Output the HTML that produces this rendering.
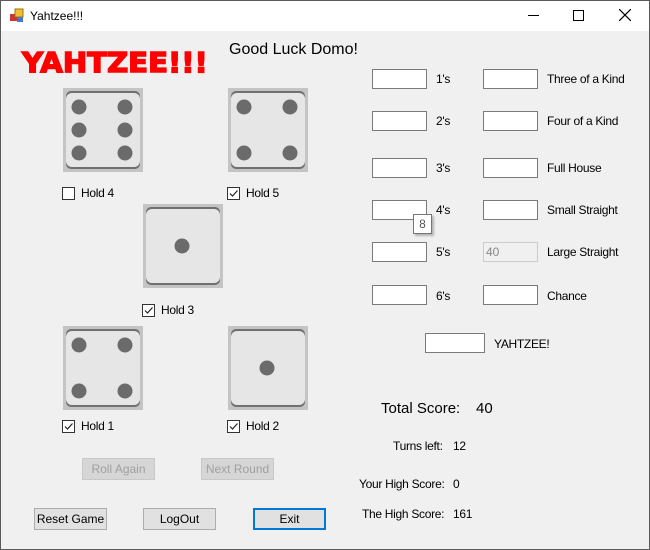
<!DOCTYPE html>
<html><head><style>
body{margin:0;width:650px;height:550px;overflow:hidden;font-family:"Liberation Sans",sans-serif;font-size:12px;color:#000}
.win{position:absolute;left:0;top:0;width:650px;height:550px;background:#f0f0f0}
.frame{position:absolute;left:0;top:0;width:648px;height:548px;border:1px solid #5a5a5a;z-index:5}
.title{position:absolute;left:0;top:0;width:650px;height:31px;background:#fff}
.a{position:absolute}
.tb{position:absolute;width:53px;height:18px;background:#fff;border:1px solid #7a7a7a}
.lbl{position:absolute;font-size:12px;letter-spacing:-0.3px}
.cb{position:absolute;width:11px;height:11px;border:1px solid #333;background:#fff}
.btn{position:absolute;height:20px;border:1px solid #adadad;background:#e1e1e1;text-align:center;line-height:20px;font-size:12px}
.dis{color:#a0a0a0;background:#d6d6d6;border-color:#c8c8c8}
</style></head><body>
<div class="win">
<div class="frame"></div>
<div class="title">
<svg class="a" style="left:9px;top:8px" width="16" height="16"><rect x="1" y="6" width="7" height="7" fill="#c33"/><rect x="6" y="1" width="8" height="8" fill="#f0c030" stroke="#a07010"/><rect x="8" y="9" width="6" height="5" fill="#4a78c8"/></svg>
<div class="a" style="left:30px;top:9px;font-size:12px">Yahtzee!!!</div>
<div class="a" style="left:528px;top:15px;width:11px;height:1px;background:#000"></div>
<div class="a" style="left:573px;top:10px;width:9px;height:9px;border:1px solid #000"></div>
<svg class="a" style="left:619px;top:9px" width="12" height="12"><path d="M0 0L12 12M12 0L0 12" stroke="#000" stroke-width="1.2"/></svg>
</div>
<div class="a" style="left:22px;top:46px;color:#f00;font-family:'DejaVu Sans',sans-serif;font-weight:900;font-size:28px;letter-spacing:0px;transform:scaleX(1.04);transform-origin:left;-webkit-text-stroke:1.5px #f00">YAHTZEE!!!</div>
<div class="a" style="left:229px;top:41px;font-size:16px">Good Luck Domo!</div>

<svg class="a" style="left:63px;top:88px" width="80" height="84"><rect width="80" height="84" fill="#c4c4c4"/><rect x="3" y="3" width="74" height="78" rx="5" fill="#707070"/><rect x="3" y="5" width="74" height="74" rx="6" fill="#e6e6e6"/><g fill="#6b6b6b"><circle cx="16" cy="19" r="7.5"/><circle cx="62" cy="19" r="7.5"/><circle cx="16" cy="42" r="7.5"/><circle cx="62" cy="42" r="7.5"/><circle cx="16" cy="65" r="7.5"/><circle cx="62" cy="65" r="7.5"/></g></svg>
<svg class="a" style="left:228px;top:88px" width="80" height="84"><rect width="80" height="84" fill="#c4c4c4"/><rect x="3" y="3" width="74" height="78" rx="5" fill="#707070"/><rect x="3" y="5" width="74" height="74" rx="6" fill="#e6e6e6"/><g fill="#6b6b6b"><circle cx="16" cy="19" r="7.5"/><circle cx="62" cy="19" r="7.5"/><circle cx="16" cy="65" r="7.5"/><circle cx="62" cy="65" r="7.5"/></g></svg>
<svg class="a" style="left:143px;top:204px" width="80" height="84"><rect width="80" height="84" fill="#c4c4c4"/><rect x="3" y="3" width="74" height="78" rx="5" fill="#707070"/><rect x="3" y="5" width="74" height="74" rx="6" fill="#e6e6e6"/><circle cx="39" cy="42" r="7.5" fill="#6b6b6b"/></svg>
<svg class="a" style="left:63px;top:326px" width="80" height="84"><rect width="80" height="84" fill="#c4c4c4"/><rect x="3" y="3" width="74" height="78" rx="5" fill="#707070"/><rect x="3" y="5" width="74" height="74" rx="6" fill="#e6e6e6"/><g fill="#6b6b6b"><circle cx="16" cy="19" r="7.5"/><circle cx="62" cy="19" r="7.5"/><circle cx="16" cy="65" r="7.5"/><circle cx="62" cy="65" r="7.5"/></g></svg>
<svg class="a" style="left:228px;top:326px" width="80" height="84"><rect width="80" height="84" fill="#c4c4c4"/><rect x="3" y="3" width="74" height="78" rx="5" fill="#707070"/><rect x="3" y="5" width="74" height="74" rx="6" fill="#e6e6e6"/><circle cx="39" cy="42" r="7.5" fill="#6b6b6b"/></svg>

<div class="cb" style="left:62px;top:187px"></div><div class="lbl" style="left:81px;top:186px">Hold 4</div>
<div class="cb" style="left:227px;top:187px"></div><svg class="a" style="left:228px;top:188px" width="11" height="11"><path d="M2 5.5L4.5 8L9.5 2.5" stroke="#222" fill="none" stroke-width="1.2"/></svg><div class="lbl" style="left:246px;top:186px">Hold 5</div>
<div class="cb" style="left:142px;top:304px"></div><svg class="a" style="left:143px;top:305px" width="11" height="11"><path d="M2 5.5L4.5 8L9.5 2.5" stroke="#222" fill="none" stroke-width="1.2"/></svg><div class="lbl" style="left:161px;top:303px">Hold 3</div>
<div class="cb" style="left:62px;top:420px"></div><svg class="a" style="left:63px;top:421px" width="11" height="11"><path d="M2 5.5L4.5 8L9.5 2.5" stroke="#222" fill="none" stroke-width="1.2"/></svg><div class="lbl" style="left:81px;top:419px">Hold 1</div>
<div class="cb" style="left:227px;top:420px"></div><svg class="a" style="left:228px;top:421px" width="11" height="11"><path d="M2 5.5L4.5 8L9.5 2.5" stroke="#222" fill="none" stroke-width="1.2"/></svg><div class="lbl" style="left:246px;top:419px">Hold 2</div>

<div class="tb" style="left:372px;top:69px"></div><div class="lbl" style="left:436px;top:72px">1's</div>
<div class="tb" style="left:372px;top:111px"></div><div class="lbl" style="left:436px;top:114px">2's</div>
<div class="tb" style="left:372px;top:158px"></div><div class="lbl" style="left:436px;top:161px">3's</div>
<div class="tb" style="left:372px;top:200px"></div><div class="lbl" style="left:436px;top:203px">4's</div>
<div class="tb" style="left:372px;top:242px"></div><div class="lbl" style="left:436px;top:245px">5's</div>
<div class="tb" style="left:372px;top:285px"></div><div class="lbl" style="left:436px;top:289px">6's</div>
<div class="a" style="left:413px;top:214px;width:17px;height:18px;background:#fff;border:1px solid #767676;box-shadow:2px 2px 2px rgba(0,0,0,.25);text-align:center;line-height:18px;color:#555">8</div>
<div class="tb" style="left:483px;top:69px"></div><div class="lbl" style="left:547px;top:72px">Three of a Kind</div>
<div class="tb" style="left:483px;top:111px"></div><div class="lbl" style="left:547px;top:114px">Four of a Kind</div>
<div class="tb" style="left:483px;top:158px"></div><div class="lbl" style="left:547px;top:161px">Full House</div>
<div class="tb" style="left:483px;top:200px"></div><div class="lbl" style="left:547px;top:203px">Small Straight</div>
<div class="tb" style="left:483px;top:242px;background:#f0f0f0;border-color:#ccc;color:#888;line-height:18px;padding-left:2px;width:51px">40</div><div class="lbl" style="left:547px;top:245px">Large Straight</div>
<div class="tb" style="left:483px;top:285px"></div><div class="lbl" style="left:547px;top:289px">Chance</div>
<div class="tb" style="left:425px;top:333px;width:58px"></div><div class="lbl" style="left:494px;top:337px">YAHTZEE!</div>

<div class="a" style="left:381px;top:400px;font-size:15px">Total Score:</div>
<div class="a" style="left:476px;top:400px;font-size:15px">40</div>
<div class="lbl" style="left:393px;top:439px">Turns left:</div><div class="lbl" style="left:453px;top:439px">12</div>
<div class="lbl" style="left:359px;top:477px">Your High Score:</div><div class="lbl" style="left:453px;top:477px">0</div>
<div class="lbl" style="left:362px;top:507px">The High Score:</div><div class="lbl" style="left:453px;top:507px">161</div>

<div class="btn dis" style="left:82px;top:458px;width:71px">Roll Again</div>
<div class="btn dis" style="left:201px;top:458px;width:71px">Next Round</div>
<div class="btn" style="left:34px;top:508px;width:71px">Reset Game</div>
<div class="btn" style="left:143px;top:508px;width:71px">LogOut</div>
<div class="btn" style="left:253px;top:508px;width:71px;border:1px solid #0078d7;box-shadow:inset 0 0 0 1px #0078d7">Exit</div>
</div>
</body></html>
